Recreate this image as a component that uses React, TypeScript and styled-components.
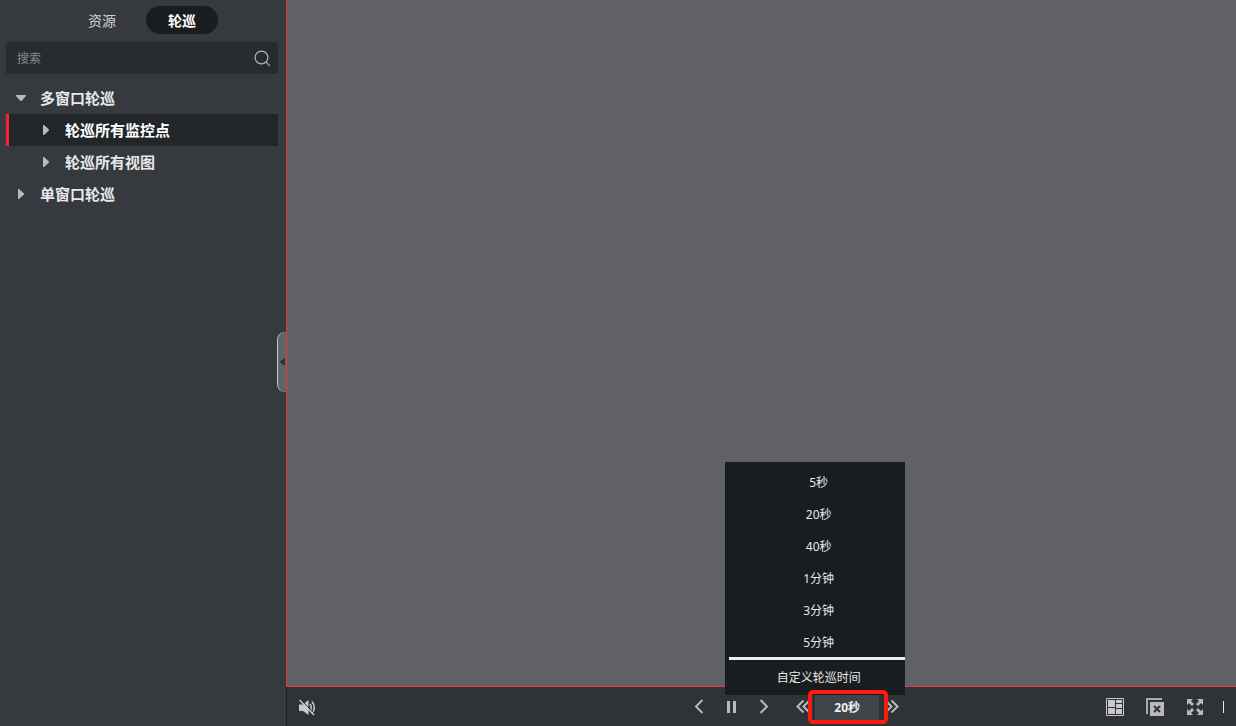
import React, { useState } from "react";
import styled, { createGlobalStyle, css } from "styled-components";

const Global = createGlobalStyle`
  * { box-sizing: border-box; }
  html, body { margin: 0; padding: 0; background: #36393e; }
  body, button, input {
    font-family: "Noto Sans", "Noto Sans CJK SC", sans-serif;
  }
  button { border: 0; padding: 0; background: none; color: inherit; cursor: pointer; }
  ul { list-style: none; margin: 0; padding: 0; }
  svg { display: block; }
`;

const Page = styled.div`
  display: flex;
  height: 100vh;
  color: #e6e6e6;
`;

const Sidebar = styled.aside`
  position: relative;
  flex: 0 0 286px;
  padding: 6px 8px 6px 6px;
  background: #36393e;
`;

const Tabs = styled.div`
  display: flex;
  justify-content: center;
  gap: 8px;
`;

const Tab = styled.button<{ $active?: boolean }>`
  width: 72px;
  height: 28px;
  padding-top: 2px;
  border-radius: 14px;
  font-size: 14px;
  line-height: 26px;
  color: #d0d1d2;
  ${(p) =>
    p.$active &&
    css`
      background: #191d1f;
      color: #ffffff;
      font-weight: 700;
    `}
`;

const SearchBox = styled.label`
  display: flex;
  align-items: center;
  height: 32px;
  margin-top: 8px;
  padding: 0 7px 0 11px;
  border-radius: 2px;
  background: #282b2f;
  color: #b4b5b6;
`;

const SearchInput = styled.input`
  flex: 1;
  min-width: 0;
  padding: 0;
  border: 0;
  outline: 0;
  background: transparent;
  color: #e6e6e6;
  font-size: 12px;
  &::placeholder { color: #86888a; opacity: 1; }
`;

const Tree = styled.ul`
  && { margin-top: 8px; }
`;

const TreeRow = styled.button<{ $level: number; $selected?: boolean }>`
  display: flex;
  align-items: center;
  gap: 12px;
  width: 100%;
  height: 32px;
  padding-left: ${(p) => (p.$level === 0 ? 6 : 31)}px;
  border-left: 3px solid ${(p) => (p.$selected ? "#f5222d" : "transparent")};
  background: ${(p) => (p.$selected ? "#222628" : "transparent")};
  color: ${(p) => (p.$selected ? "#ffffff" : "#e8e8e8")};
  font-size: 15px;
  font-weight: 700;
  line-height: 32px;
  svg { color: #b9b9b9; }
`;

const CollapseHandle = styled.button`
  position: absolute;
  right: 0;
  top: 50%;
  display: flex;
  align-items: center;
  justify-content: center;
  width: 9px;
  height: 60px;
  margin-top: -31px;
  border-left: 1px solid #c4c5c6;
  border-radius: 8px 0 0 8px;
  background: #626367;
  color: #2f3236;
`;

const Main = styled.main`
  flex: 1;
  min-width: 0;
  display: flex;
  flex-direction: column;
`;

const Stage = styled.section`
  flex: 1;
  border-left: 1px solid #e03a3a;
  border-bottom: 1px solid #e03a3a;
  background: #606166;
`;

const Toolbar = styled.footer`
  display: grid;
  grid-template-columns: 11fr auto 9fr;
  align-items: center;
  height: 39px;
  padding: 0 12px 0 8px;
  background: #2f3237;
  border-left: 1px solid #1f2225;
  color: #b9b9b9;
`;

const Group = styled.div<{ $gap?: number; $end?: boolean }>`
  display: flex;
  align-items: center;
  justify-content: ${(p) => (p.$end ? "flex-end" : "flex-start")};
  gap: ${(p) => p.$gap ?? 0}px;
`;

const IconButton = styled.button`
  display: flex;
  align-items: center;
  justify-content: center;
  width: 24px;
  height: 24px;
`;

const IntervalPicker = styled.div`
  display: flex;
  align-items: center;
  margin-left: 8px;
`;

const IntervalAnchor = styled.div`
  position: relative;
`;

const IntervalButton = styled.button`
  display: block;
  width: 64px;
  height: 26px;
  padding-top: 2px;
  background: #404348;
  color: #f2f2f2;
  font-size: 12px;
  font-weight: 700;
  line-height: 24px;
`;

const Highlight = styled.span`
  position: absolute;
  inset: -4px -9px -4px -7px;
  border: 4px solid #ff1a10;
  border-radius: 5px;
  pointer-events: none;
`;

const Menu = styled.ul`
  && {
    position: absolute;
    right: -26px;
    bottom: 25px;
    width: 180px;
    padding: 3px 0 3px 4px;
    background: #191d1f;
  }
`;

const MenuItem = styled.button`
  display: block;
  width: 100%;
  height: 32px;
  padding: 4px 0 0 3px;
  color: #e8e8e8;
  font-size: 12px;
  line-height: 28px;
`;

const MenuFooter = styled.li`
  border-top: 3px solid #eeeeec;
`;

const Divider = styled.span`
  width: 1px;
  height: 12px;
  background: #e6e6e6;
`;

const Arrow = ({ open }: { open?: boolean }) => (
  <svg width="13" height="12" viewBox="0 0 13 12" fill="currentColor" aria-hidden="true">
    <path d={open ? "M1 3h10v1L6.500 9h-1L1 4z" : "M3 1h1l5 4.500v1L4 11H3z"} />
  </svg>
);

const Chevron = ({ left, double }: { left?: boolean; double?: boolean }) => {
  const one = left ? "M11.500 2L5 8.500l6.500 6.500" : "M5.500 2L12 8.500 5.500 15";
  const two = left
    ? "M8.500 2.500l-6 6 6 6M14.500 2.500l-6 6 6 6"
    : "M2.500 2.500l6 6-6 6M8.500 2.500l6 6-6 6";
  return (
    <svg width="17" height="17" viewBox="0 0 17 17" fill="none" stroke="currentColor" strokeWidth="2" aria-hidden="true">
      <path d={double ? two : one} />
    </svg>
  );
};

const tree = [
  { label: "多窗口轮巡", level: 0, open: true },
  { label: "轮巡所有监控点", level: 1, open: false },
  { label: "轮巡所有视图", level: 1, open: false },
  { label: "单窗口轮巡", level: 0, open: false },
];

const intervals = ["5秒", "20秒", "40秒", "1分钟", "3分钟", "5分钟"];

export default function App() {
  const [selected, setSelected] = useState("轮巡所有监控点");
  const [interval, setIntervalLabel] = useState("20秒");

  return (
    <>
      <Global />
      <Page>
        <Sidebar>
          <Tabs role="tablist">
            <Tab role="tab" aria-selected={false}>资源</Tab>
            <Tab role="tab" aria-selected $active>轮巡</Tab>
          </Tabs>
          <SearchBox>
            <SearchInput type="text" placeholder="搜索" aria-label="搜索" />
            <svg width="17" height="17" viewBox="0 0 17 17" fill="none" stroke="currentColor" strokeWidth="1.200" aria-hidden="true">
              <circle cx="7.500" cy="7.500" r="6.400" />
              <path d="M12.200 12.200l3.600 3.600" />
            </svg>
          </SearchBox>
          <Tree>
            {tree.map((n) => (
              <li key={n.label}>
                <TreeRow $level={n.level} $selected={n.label === selected} onClick={() => setSelected(n.label)}>
                  <Arrow open={n.open} />
                  {n.label}
                </TreeRow>
              </li>
            ))}
          </Tree>
          <CollapseHandle aria-label="收起">
            <svg width="5" height="8" viewBox="0 0 5 8" fill="currentColor" aria-hidden="true">
              <path d="M5 0v8L0 4.500v-1z" />
            </svg>
          </CollapseHandle>
        </Sidebar>
        <Main>
          <Stage />
          <Toolbar>
            <Group>
              <IconButton aria-label="静音">
                <svg width="18" height="18" viewBox="0 0 18 18" aria-hidden="true">
                  <path d="M1 6.500h4L10.500 2v15L5 13H1z" fill="#c8c8c8" />
                  <path d="M12 6q2.600 3.500 0 7M14 3.500q4.600 6 0 12" fill="none" stroke="#c8c8c8" strokeWidth="1.500" />
                  <path d="M3 1.800l14 14.200" stroke="#2f3237" strokeWidth="1" />
                  <path d="M1.500 2l14.500 15" stroke="#c8c8c8" strokeWidth="1.400" />
                </svg>
              </IconButton>
            </Group>
            <Group $gap={8}>
              <IconButton aria-label="上一个"><Chevron left /></IconButton>
              <IconButton aria-label="暂停">
                <svg width="16" height="16" viewBox="0 0 16 16" fill="currentColor" aria-hidden="true">
                  <path d="M4 2h3v12H4zM10 2h3v12h-3z" />
                </svg>
              </IconButton>
              <IconButton aria-label="下一个"><Chevron /></IconButton>
              <IntervalPicker>
                <IconButton aria-label="减少时间"><Chevron left double /></IconButton>
                <IntervalAnchor>
                  <IntervalButton aria-haspopup="menu" aria-expanded>{interval}</IntervalButton>
                  <Menu>
                    {intervals.map((t) => (
                      <li key={t}>
                        <MenuItem onClick={() => setIntervalLabel(t)}>{t}</MenuItem>
                      </li>
                    ))}
                    <MenuFooter>
                      <MenuItem>自定义轮巡时间</MenuItem>
                    </MenuFooter>
                  </Menu>
                  <Highlight />
                </IntervalAnchor>
                <IconButton aria-label="增加时间"><Chevron double /></IconButton>
              </IntervalPicker>
            </Group>
            <Group $gap={16} $end>
              <IconButton aria-label="窗口分割">
                <svg width="18" height="18" viewBox="0 0 18 18" aria-hidden="true">
                  <path d="M.500.500h17v17H.500z" fill="none" stroke="#c8c8c8" />
                  <path d="M2 2h7v7H2zM10 2h6v3h-6zM10 6h6v4h-6zM2 10h7v6H2zM10 11h6v5h-6z" fill="#c8c8c8" />
                </svg>
              </IconButton>
              <IconButton aria-label="关闭全部">
                <svg width="18" height="18" viewBox="0 0 18 18" aria-hidden="true">
                  <path d="M0 0h16v2H2v14H0z" fill="#aaabac" />
                  <path d="M4 4h14v14H4z" fill="#b9b9b9" />
                  <path d="M8 8l6 6M14 8l-6 6" stroke="#2f3237" strokeWidth="2" />
                </svg>
              </IconButton>
              <IconButton aria-label="全屏">
                <svg width="16" height="16" viewBox="0 0 16 16" fill="#b9b9b9" aria-hidden="true">
                  <path d="M0 0h6L4 2l3 3-2 2-3-3-2 2zM16 0v6l-2-2-3 3-2-2 3-3-2-2zM0 16v-6l2 2 3-3 2 2-3 3 2 2zM16 16h-6l2-2-3-3 2-2 3 3 2-2z" />
                </svg>
              </IconButton>
              <Divider />
            </Group>
          </Toolbar>
        </Main>
      </Page>
    </>
  );
}
